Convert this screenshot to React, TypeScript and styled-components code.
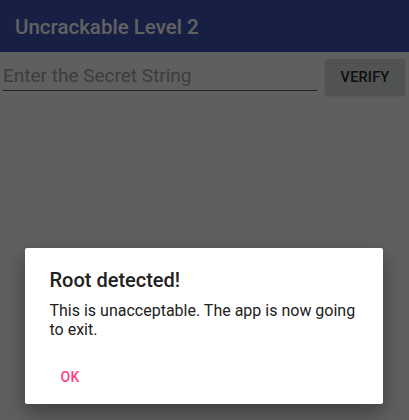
import styled, { createGlobalStyle } from 'styled-components'

const GlobalStyle = createGlobalStyle`
  html, body {
    margin: 0;
    padding: 0;
    background: #fafafa;
    font-family: Roboto, "Liberation Sans", sans-serif;
  }
  #root {
    min-height: 420px;
  }
`

const Screen = styled.div`
  position: relative;
  width: 409px;
  height: 420px;
  overflow: hidden;
  background: #fafafa;
`

const AppBar = styled.header`
  height: 52px;
  background: #3f51b5;
  display: flex;
  align-items: center;
  padding: 0 15px;
`

const Title = styled.h1`
  margin: 0;
  font-size: 20.5px;
  font-weight: 500;
  color: #ffffff;
  padding-top: 1px;
`

const Form = styled.div`
  display: flex;
  align-items: flex-start;
  gap: 8px;
  padding: 7px 4px 0 3px;
`

const SecretInput = styled.input`
  flex: 1;
  min-width: 0;
  height: 30px;
  margin-top: 1px;
  padding: 0;
  border: none;
  border-bottom: 1px solid #595959;
  background: transparent;
  font-family: Roboto, "Liberation Sans", sans-serif;
  font-size: 19px;
  color: #212121;
  outline: none;

  &::placeholder {
    color: #a0a0a0;
  }
`

const VerifyButton = styled.button`
  width: 80px;
  height: 36px;
  border: none;
  border-radius: 2px;
  background: #d6d7d7;
  font-family: Roboto, "Liberation Sans", sans-serif;
  font-size: 14.5px;
  font-weight: 500;
  color: #2a2a2a;
  letter-spacing: 0.2px;
  box-shadow: 0 1px 2px rgba(0, 0, 0, 0.2);
`

const Scrim = styled.div`
  position: absolute;
  inset: 0;
  background: rgba(0, 0, 0, 0.62);
  display: flex;
  align-items: flex-start;
  justify-content: center;
  padding-top: 248px;
`

const Dialog = styled.div`
  width: 358px;
  height: 156px;
  box-sizing: border-box;
  margin-left: -2px;
  background: #ffffff;
  border-radius: 2px;
  box-shadow: 0 8px 20px rgba(0, 0, 0, 0.35);
  padding: 20px 18px 0 25px;
  display: flex;
  flex-direction: column;
`

const DialogTitle = styled.h2`
  margin: 0;
  font-size: 20px;
  font-weight: 500;
  color: #212121;
  line-height: 24px;
`

const DialogMessage = styled.p`
  margin: 10px 0 0;
  font-size: 16px;
  line-height: 18.7px;
  color: #212121;
`

const Actions = styled.div`
  display: flex;
  margin-top: 30px;
  margin-left: 1px;
`

const TextButton = styled.button`
  border: none;
  background: transparent;
  padding: 0 10px;
  font-family: Roboto, "Liberation Sans", sans-serif;
  font-size: 14px;
  font-weight: 500;
  color: #ff4081;
  letter-spacing: 0.4px;
`

export default function App() {
  return (
    <>
      <GlobalStyle />
      <Screen>
        <AppBar>
          <Title>Uncrackable Level 2</Title>
        </AppBar>
        <Form>
          <SecretInput placeholder="Enter the Secret String" />
          <VerifyButton>VERIFY</VerifyButton>
        </Form>
        <Scrim>
          <Dialog role="dialog">
            <DialogTitle>Root detected!</DialogTitle>
            <DialogMessage>This is unacceptable. The app is now going to exit.</DialogMessage>
            <Actions>
              <TextButton>OK</TextButton>
            </Actions>
          </Dialog>
        </Scrim>
      </Screen>
    </>
  )
}
